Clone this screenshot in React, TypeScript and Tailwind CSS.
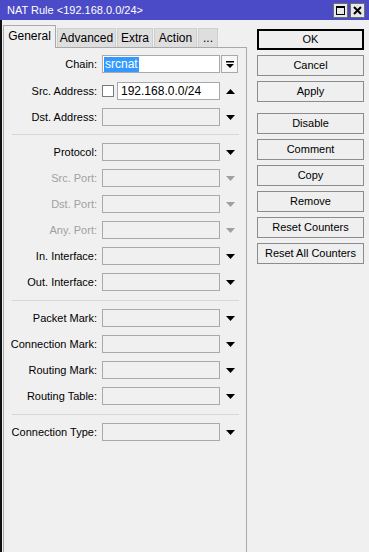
import React from 'react';

type Field = {
  label: string;
  disabled?: boolean;
};

const TABS = [
  { name: 'General', w: 'w-[53px]', active: true },
  { name: 'Advanced', w: 'w-[59px]' },
  { name: 'Extra', w: 'w-[36px]' },
  { name: 'Action', w: 'w-[43px]' },
  { name: '...', w: 'w-[20px]' },
];

const SECTION_A: Field[] = [
  { label: 'Protocol:' },
  { label: 'Src. Port:', disabled: true },
  { label: 'Dst. Port:', disabled: true },
  { label: 'Any. Port:', disabled: true },
  { label: 'In. Interface:' },
  { label: 'Out. Interface:' },
];

const SECTION_B: Field[] = [
  { label: 'Packet Mark:' },
  { label: 'Connection Mark:' },
  { label: 'Routing Mark:' },
  { label: 'Routing Table:' },
];

const TOP_BUTTONS = ['OK', 'Cancel', 'Apply'];
const ACTION_BUTTONS = ['Disable', 'Comment', 'Copy', 'Remove', 'Reset Counters', 'Reset All Counters'];

const Triangle = ({ dir, muted }: { dir: 'up' | 'down'; muted?: boolean }) => (
  <svg width="9" height="5" viewBox="0 0 9 5" className={muted ? 'text-[#a0a0a0]' : 'text-black'}>
    {dir === 'down' ? <path d="M0 0H9L4.5 5Z" fill="currentColor" /> : <path d="M0 5H9L4.5 0Z" fill="currentColor" />}
  </svg>
);

const Label = ({ text, muted }: { text: string; muted?: boolean }) => (
  <span className={`w-[93px] shrink-0 text-right whitespace-nowrap ${muted ? 'text-[#a0a0a0]' : 'text-black'}`}>
    {text}
  </span>
);

const Row = ({ field }: { field: Field }) => (
  <div className="flex h-[18px] items-center">
    <Label text={field.label} muted={field.disabled} />
    <div className="ml-[5px] h-[18px] w-[118px] border border-[#a9a9a9] bg-[#f0f0f0]" />
    <div className="ml-[2px] flex w-[17px] justify-center">
      <Triangle dir="down" muted={field.disabled} />
    </div>
  </div>
);

const Separator = () => <div className="ml-[8px] h-px w-[227px] bg-[#d7d7d7]" />;

const Button = ({ text, primary }: { text: string; primary?: boolean }) => (
  <button
    className={`flex h-[21px] w-[107px] items-center justify-center border bg-[#efefef] text-[11px] text-black ${
      primary ? 'border-black shadow-[inset_0_0_0_1px_#000]' : 'border-[#8c8c8c]'
    }`}
  >
    {text}
  </button>
);

export default function App() {
  return (
    <div
      className="flex h-[552px] w-[369px] flex-col overflow-hidden bg-[#f0f0f0] text-[11px]"
      style={{ fontFamily: '"Liberation Sans", Arial, sans-serif' }}
    >
      {/* title bar */}
      <div className="flex h-[20px] shrink-0 items-center bg-[#4b4bc8] pl-[7px] pr-[4px] text-white">
        <span>NAT Rule &lt;192.168.0.0/24&gt;</span>
        <div className="ml-auto flex gap-[2px]">
          <div className="flex h-[15px] w-[15px] items-center justify-center border border-[#6f6f6f] bg-[#e8e8e8]">
            <div className="h-[9px] w-[9px] border border-t-2 border-black" />
          </div>
          <div className="flex h-[15px] w-[15px] items-center justify-center border border-[#6f6f6f] bg-[#e8e8e8]">
            <svg width="9" height="9" viewBox="0 0 9 9">
              <path d="M1 1L8 8M8 1L1 8" stroke="#000" strokeWidth="2" />
            </svg>
          </div>
        </div>
      </div>

      <div className="flex flex-1 border-l-2 border-[#111]">
        {/* tabs + panel */}
        <div className="ml-px flex w-[244px] flex-col pt-[5px]">
          <div className="flex h-[22px] items-end">
            {TABS.map((tab) =>
              tab.active ? (
                <div
                  key={tab.name}
                  className={`relative z-10 -mb-px flex h-[23px] ${tab.w} items-center justify-center border border-b-0 border-[#a9a9a9] bg-[#f0f0f0] pb-[2px] text-[12px] text-black`}
                >
                  {tab.name}
                </div>
              ) : (
                <div
                  key={tab.name}
                  className={`ml-px flex h-[19px] ${tab.w} items-center justify-center border border-b-0 border-[#cfcfcf] bg-[#dedede] text-[12px] text-black`}
                >
                  {tab.name}
                </div>
              ),
            )}
          </div>

          <div className="flex flex-1 flex-col border border-b-0 border-[#a9a9a9] pt-[7px]">
            {/* Chain */}
            <div className="flex h-[18px] items-center">
              <Label text="Chain:" />
              <div className="ml-[5px] flex h-[18px] w-[118px] items-center border border-[#a9a9a9] bg-white pl-[1px]">
                <span className="bg-[#3399ff] px-[1px] leading-[15px] text-[12px] text-white">srcnat</span>
              </div>
              <div className="ml-px flex h-[18px] w-[17px] items-center justify-center border border-[#a9a9a9] bg-[#f7f7f7]">
                <svg width="8" height="7" viewBox="0 0 8 7">
                  <rect x="0" y="0" width="8" height="1.5" fill="#000" />
                  <path d="M0 3H8L4 7Z" fill="#000" />
                </svg>
              </div>
            </div>

            {/* Src. Address */}
            <div className="mt-[9px] flex h-[18px] items-center">
              <Label text="Src. Address:" />
              <div className="ml-[5px] h-[12px] w-[12px] border border-[#7a7a7a] bg-white" />
              <div className="ml-[3px] flex h-[18px] w-[103px] items-center border border-[#a9a9a9] bg-white pl-[3px] text-[12px] text-black">
                192.168.0.0/24
              </div>
              <div className="ml-[2px] flex w-[17px] justify-center">
                <Triangle dir="up" />
              </div>
            </div>

            {/* Dst. Address */}
            <div className="mt-[8px]">
              <Row field={{ label: 'Dst. Address:' }} />
            </div>

            <div className="mt-[8px]">
              <Separator />
            </div>

            <div className="mt-[8px] flex flex-col gap-[8px]">
              {SECTION_A.map((f) => (
                <Row key={f.label} field={f} />
              ))}
            </div>

            <div className="mt-[9px]">
              <Separator />
            </div>

            <div className="mt-[8px] flex flex-col gap-[8px]">
              {SECTION_B.map((f) => (
                <Row key={f.label} field={f} />
              ))}
            </div>

            <div className="mt-[9px]">
              <Separator />
            </div>

            <div className="mt-[8px]">
              <Row field={{ label: 'Connection Type:' }} />
            </div>
          </div>
        </div>

        {/* buttons */}
        <div className="flex flex-col pl-[10px] pt-[9px]">
          <div className="flex flex-col gap-[5px]">
            {TOP_BUTTONS.map((b) => (
              <Button key={b} text={b} primary={b === 'OK'} />
            ))}
          </div>
          <div className="mt-[11px] flex flex-col gap-[5px]">
            {ACTION_BUTTONS.map((b) => (
              <Button key={b} text={b} />
            ))}
          </div>
        </div>
      </div>
    </div>
  );
}
